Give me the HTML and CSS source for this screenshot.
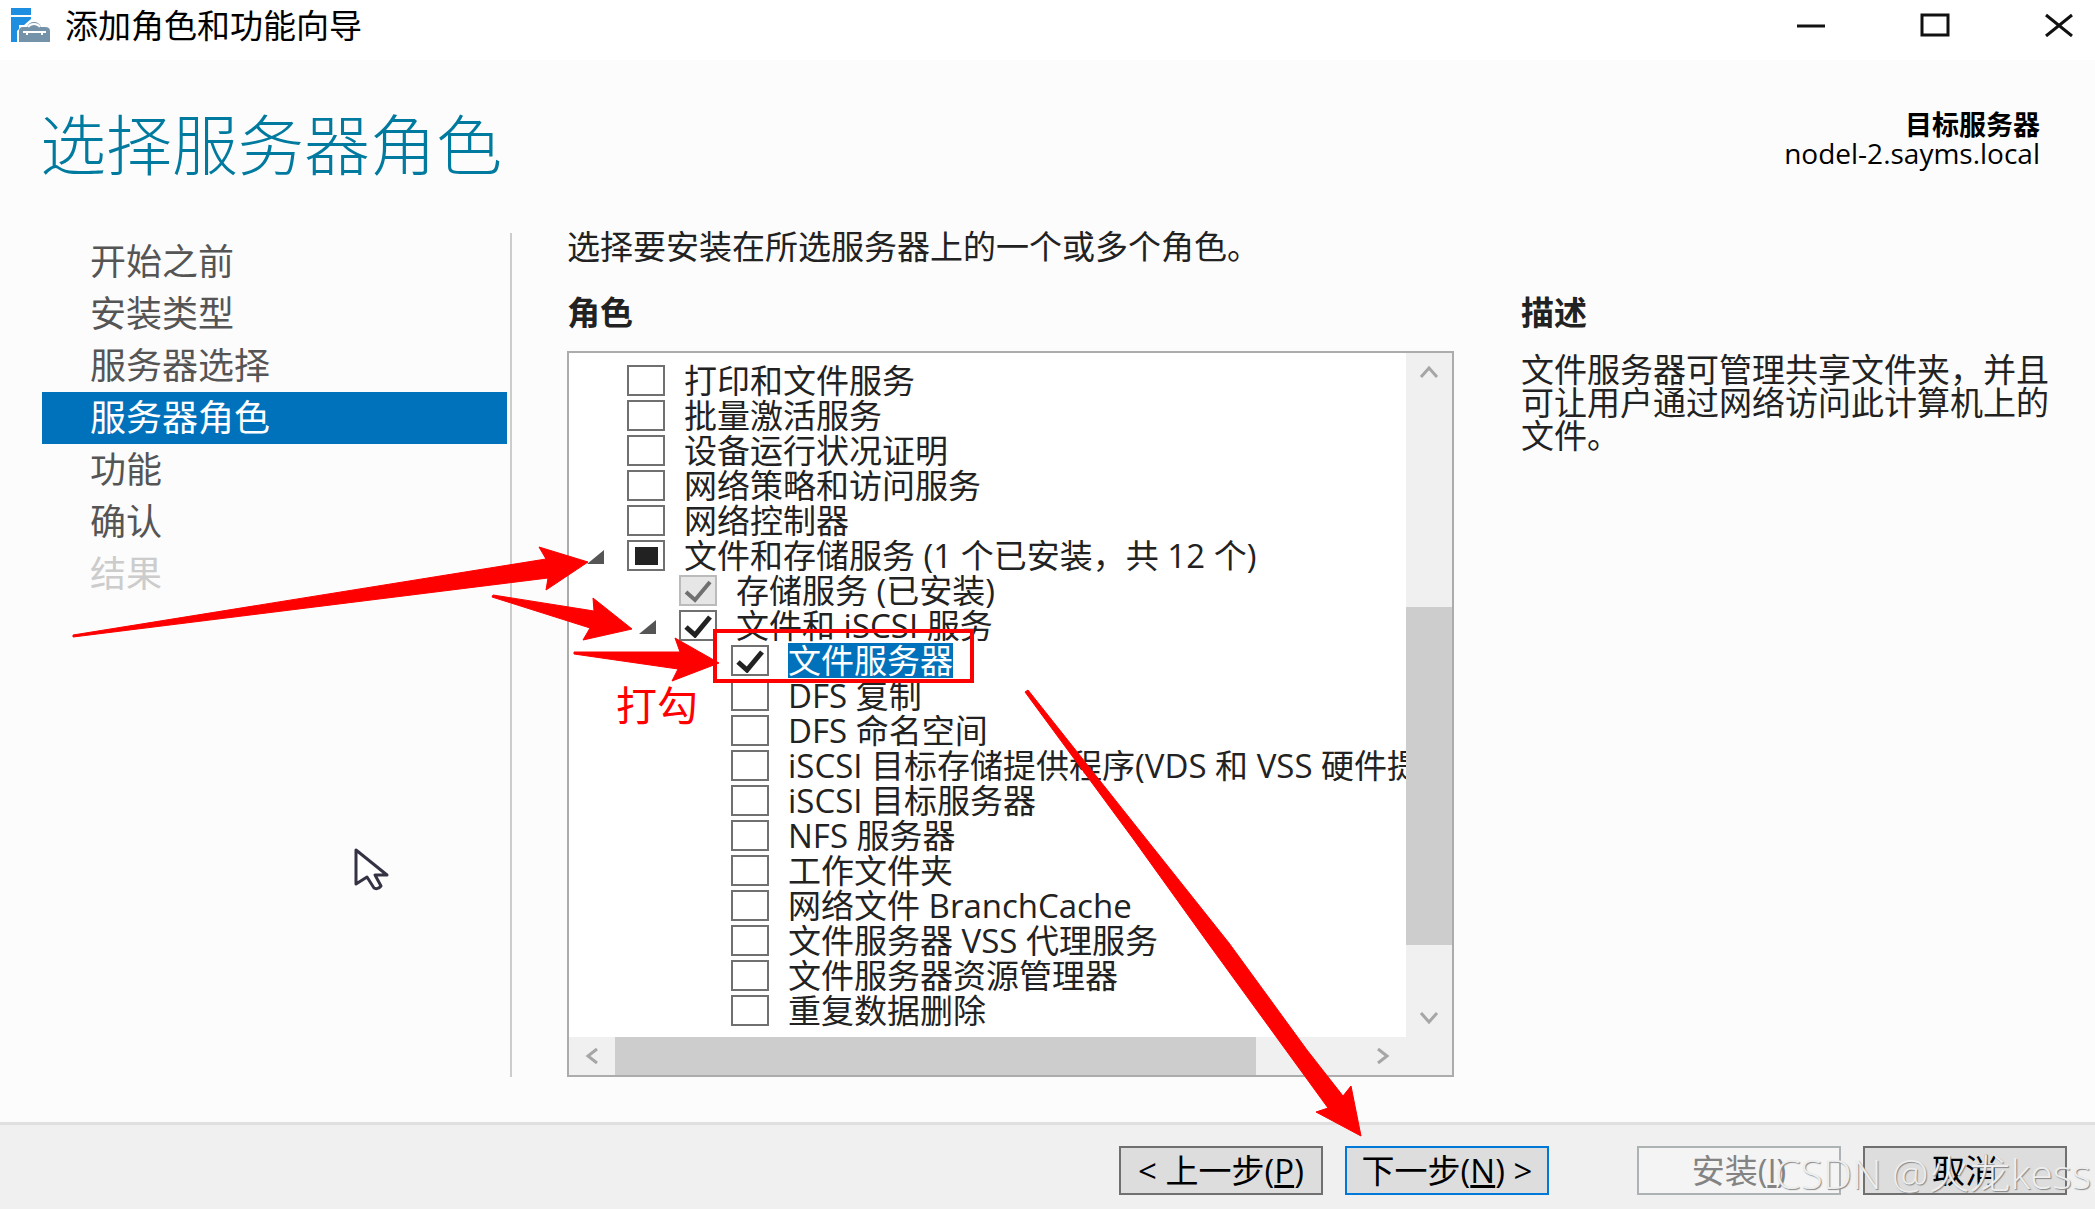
FILE: index.html
```
<!DOCTYPE html>
<html lang="zh-CN">

<head>
    <meta charset="UTF-8">
    <meta name="viewport" content="width=device-width, initial-scale=1.0">
    <title>添加角色和功能向导</title>
    <link rel="stylesheet" href="styles.css">
</head>

<body>
    <div class="window">
        <div class="titlebar">
            <svg class="app-icon" viewBox="0 0 40 34">
                <path fill="#1e8fe0" d="M0 0h20v7H0zM0 9h20v2l-7 6H8v4l-2 2v11H0z" />
                <path fill="#7593a8" d="M8 23q0-4 4-4h4q2-5 7-5t7 5h4q5 0 5 4v11H8z" />
                <path fill="none" stroke="#fff" stroke-width="2" d="M17 19q2-3 6-3t6 3M12 24h23M16 23v4M31 23v4" />
            </svg>
            <span class="title">添加角色和功能向导</span>
            <div class="win-btns">
                <button type="button" aria-label="最小化"><svg viewBox="0 0 30 24"><path d="M1 13h28" /></svg></button>
                <button type="button" aria-label="最大化"><svg viewBox="0 0 30 24"><path d="M2 2h26v20H2z" /></svg></button>
                <button type="button" aria-label="关闭"><svg viewBox="0 0 30 24"><path d="M2 2l26 21M28 2L2 23" /></svg></button>
            </div>
        </div>

        <div class="header">
            <h1>选择服务器角色</h1>
            <div class="target">
                <b>目标服务器</b>
                <span>nodel-2.sayms.local</span>
            </div>
        </div>

        <div class="main">
            <ul class="steps">
                <li><a href="#">开始之前</a></li>
                <li><a href="#">安装类型</a></li>
                <li><a href="#">服务器选择</a></li>
                <li class="select"><a href="#">服务器角色</a></li>
                <li><a href="#">功能</a></li>
                <li><a href="#">确认</a></li>
                <li class="disabled"><a href="#">结果</a></li>
            </ul>

            <div class="content">
                <p class="intro">选择要安装在所选服务器上的一个或多个角色。</p>
                <div class="columns">
                    <div class="roles">
                        <h2>角色</h2>
                        <div class="listbox">
                            <ul class="tree">
                                <li><label><input type="checkbox">打印和文件服务</label></li>
                                <li><label><input type="checkbox">批量激活服务</label></li>
                                <li><label><input type="checkbox">设备运行状况证明</label></li>
                                <li><label><input type="checkbox">网络策略和访问服务</label></li>
                                <li><label><input type="checkbox">网络控制器</label></li>
                                <li class="open"><label><input type="checkbox" class="part">文件和存储服务 (1 个已安装，共 12 个)</label></li>
                                <li class="lv1"><label><input type="checkbox" checked disabled>存储服务 (已安装)</label></li>
                                <li class="lv1 open"><label><input type="checkbox" checked>文件和 iSCSI 服务</label></li>
                                <li class="lv2 current"><label><input type="checkbox" checked><span>文件服务器</span></label></li>
                                <li class="lv2"><label><input type="checkbox">DFS 复制</label></li>
                                <li class="lv2"><label><input type="checkbox">DFS 命名空间</label></li>
                                <li class="lv2"><label><input type="checkbox">iSCSI 目标存储提供程序(VDS 和 VSS 硬件提供程序)</label></li>
                                <li class="lv2"><label><input type="checkbox">iSCSI 目标服务器</label></li>
                                <li class="lv2"><label><input type="checkbox">NFS 服务器</label></li>
                                <li class="lv2"><label><input type="checkbox">工作文件夹</label></li>
                                <li class="lv2"><label><input type="checkbox">网络文件 BranchCache</label></li>
                                <li class="lv2"><label><input type="checkbox">文件服务器 VSS 代理服务</label></li>
                                <li class="lv2"><label><input type="checkbox">文件服务器资源管理器</label></li>
                                <li class="lv2"><label><input type="checkbox">重复数据删除</label></li>
                            </ul>
                            <div class="vbar">
                                <button type="button" aria-label="向上"><svg viewBox="0 0 20 14"><path d="M2 12l8-9 8 9" /></svg></button>
                                <div class="track"><div class="thumb"></div></div>
                                <button type="button" aria-label="向下"><svg viewBox="0 0 20 14"><path d="M2 2l8 9 8-9" /></svg></button>
                            </div>
                            <div class="hbar">
                                <button type="button" aria-label="向左"><svg viewBox="0 0 14 18"><path d="M12 2L3 9l9 7" /></svg></button>
                                <div class="track"><div class="thumb"></div></div>
                                <button type="button" aria-label="向右"><svg viewBox="0 0 14 18"><path d="M2 2l9 7-9 7" /></svg></button>
                            </div>
                            <div class="corner"></div>
                        </div>
                    </div>
                    <div class="desc">
                        <h2>描述</h2>
                        <p>文件服务器可管理共享文件夹，并且可让用户通过网络访问此计算机上的文件。</p>
                    </div>
                </div>
            </div>
        </div>

        <div class="footer">
            <button type="button">&lt; 上一步(<u>P</u>)</button>
            <button type="button" class="default">下一步(<u>N</u>) &gt;</button>
            <button type="button" class="install" disabled>安装(<u>I</u>)</button>
            <button type="button">取消</button>
        </div>

        <!-- 标注 -->
        <svg class="marks" width="2095" height="1209" viewBox="0 0 2095 1209">
            <g fill="#f00" stroke="#f00" stroke-linejoin="round">
                <path d="M73 637L73 635 546 559 539 547 588 562 546 590 548 578z" />
                <path d="M492 597L493 595 594 611 593 598 632 629 583 640 590 628z" />
                <path d="M574 654L574 652 680 652 675 638 719 663 672 681 678 669z" />
                <path d="M1025 692L1028 690 1147 840 1229 943 1307 1050 1343 1096 1351 1086 1361 1136 1316 1112 1328 1108 1208 943 1134 840z" />
            </g>
            <rect x="715" y="631" width="257" height="50" fill="none" stroke="#f00" stroke-width="4" />
            <path d="M356 850v34l11-7 7 11q4 2 7-2l-6-11h12z" fill="#fff" stroke="#334" stroke-width="3" stroke-linejoin="round" />
        </svg>
        <span class="note">打勾</span>
        <span class="watermark">CSDN @火龙kess</span>
    </div>
</body>

</html>
```
FILE: styles.css
```
* {
    margin: 0;
    padding: 0;
    box-sizing: border-box;
    list-style: none;
}

body {
    font-family: "Open Sans", "Noto Sans CJK SC", sans-serif;
    font-size: 33px;
    line-height: 35px;
    color: #222;
    background-color: #fcfcfc;
}

button {
    font: inherit;
    border: none;
    background: none;
}

a {
    color: inherit;
    text-decoration: none;
}

h2 {
    font-size: 33px;
    line-height: 35px;
}

.window {
    position: relative;
    display: flex;
    flex-direction: column;
    min-height: 100vh;
    overflow: hidden;
}

.titlebar {
    display: flex;
    align-items: center;
    height: 60px;
    padding: 0 0 10px 11px;
    background-color: #fff;
    color: #000;
}

.app-icon {
    width: 40px;
    height: 34px;
}

.title {
    margin-left: 14px;
}

.win-btns {
    display: flex;
    margin-left: auto;
}

.win-btns button {
    width: 124px;
    height: 50px;
    display: flex;
    align-items: center;
    justify-content: center;
}

.win-btns button:last-child {
    width: 72px;
    margin-left: 26px;
}

.win-btns svg {
    width: 30px;
    height: 24px;
    fill: none;
    stroke: #111;
    stroke-width: 3;
}

.header {
    display: flex;
    justify-content: space-between;
    padding: 50px 55px 0 40px;
    height: 173px;
}

.header h1 {
    font-size: 66px;
    line-height: 68px;
    font-weight: 300;
    color: #007a9e;
}

.target {
    font-size: 28px;
    line-height: 29px;
    text-align: right;
    color: #000;
}

.target b,
.target span {
    display: block;
}

.target b {
    font-size: 27px;
}

.main {
    flex: 1;
    display: flex;
    padding: 0 30px 45px 42px;
}

.steps {
    flex: none;
    width: 470px;
    padding: 3px 3px 0 0;
    border-right: 2px solid #ccc;
    font-size: 36px;
    line-height: 52px;
    color: #555;
}

.steps li {
    padding-left: 48px;
}

.steps .select {
    background-color: #0072bc;
    color: #fff;
}

.steps .disabled {
    color: #ccc;
}

.content {
    flex: 1;
    min-width: 0;
    display: flex;
    flex-direction: column;
    padding-left: 55px;
}

.intro {
    margin: -4px 0 31px;
}

.columns {
    flex: 1;
    display: flex;
    gap: 67px;
}

.roles {
    flex: 1;
    min-width: 0;
    display: flex;
    flex-direction: column;
}

.listbox {
    flex: 1;
    display: grid;
    grid-template-columns: 1fr 46px;
    grid-template-rows: 1fr 38px;
    margin-top: 21px;
    border: 2px solid #acacac;
    background-color: #fff;
}

.tree {
    min-width: 0;
    overflow: hidden;
    padding: 10px 0 9px 58px;
    white-space: nowrap;
}

.tree li {
    position: relative;
    height: 35px;
}

.tree .lv1 {
    padding-left: 52px;
}

.tree .lv2 {
    padding-left: 104px;
}

.tree label {
    display: flex;
    align-items: center;
    gap: 19px;
}

.tree input {
    flex: none;
    appearance: none;
    width: 38px;
    height: 31px;
    border: 2px solid #707070;
    background: #fff center / 28px 24px no-repeat;
}

.tree input:checked {
    background-image: url("data:image/svg+xml,%3Csvg xmlns='http://www.w3.org/2000/svg' viewBox='0 0 28 24'%3E%3Cpath d='M2 13l9 8L26 3' fill='none' stroke='%23222' stroke-width='5'/%3E%3C/svg%3E");
}

.tree input:disabled {
    border-color: #bbb;
    background-color: #e6e6e6;
    background-image: url("data:image/svg+xml,%3Csvg xmlns='http://www.w3.org/2000/svg' viewBox='0 0 28 24'%3E%3Cpath d='M2 13l9 8L26 3' fill='none' stroke='%23707070' stroke-width='4'/%3E%3C/svg%3E");
}

.tree .part {
    background: linear-gradient(#222, #222) center / 23px 18px no-repeat #fff;
}

/* 展开三角 */
.tree .open::before {
    content: "";
    position: absolute;
    left: -40px;
    top: 12px;
    width: 17px;
    height: 14px;
    background-color: #555;
    clip-path: polygon(100% 0, 100% 100%, 0 100%);
}

.tree .lv1.open::before {
    left: 12px;
}

.tree .current span {
    background-color: #0072bc;
    color: #fff;
}

.vbar,
.hbar {
    display: flex;
    background-color: #f0f0f0;
}

.vbar {
    flex-direction: column;
}

.vbar button {
    height: 38px;
}

.hbar button {
    width: 46px;
}

.vbar button,
.hbar button {
    display: flex;
    align-items: center;
    justify-content: center;
}

.vbar svg {
    width: 20px;
    height: 14px;
}

.hbar svg {
    width: 14px;
    height: 18px;
}

.vbar svg,
.hbar svg {
    fill: none;
    stroke: #a6a6a6;
    stroke-width: 3;
}

.track {
    flex: 1;
    display: flex;
}

.thumb {
    background-color: #cdcdcd;
}

.vbar .track {
    flex-direction: column;
    justify-content: flex-end;
    padding-bottom: 54px;
}

.vbar .thumb {
    height: 61%;
}

.hbar .thumb {
    width: 86%;
}

.corner {
    background-color: #f0f0f0;
}

.desc {
    flex: none;
    width: 544px;
}

.desc p {
    margin-top: 23px;
    line-height: 33px;
}

.footer {
    display: flex;
    justify-content: flex-end;
    gap: 22px;
    height: 88px;
    padding: 21px 28px 0 0;
    border-top: 3px solid #dfdfdf;
    background-color: #f0f0f0;
}

.footer button {
    width: 204px;
    height: 49px;
    border: 2px solid #707070;
    background-color: #ddd;
    color: #000;
    white-space: nowrap;
}

.footer .default {
    border-color: #0078d7;
}

.footer .install {
    margin-left: 66px;
    border-color: #adb2b5;
    background-color: #f4f4f4;
    color: #838383;
}

.marks {
    position: absolute;
    left: 0;
    top: 0;
    pointer-events: none;
}

.note {
    position: absolute;
    left: 616px;
    top: 680px;
    font-size: 41px;
    line-height: 50px;
    color: #f00;
}

.watermark {
    position: absolute;
    right: 4px;
    bottom: 12px;
    font-size: 41px;
    line-height: 50px;
    font-weight: 300;
    color: #eee;
    text-shadow: 1px 1px 1px #888;
    pointer-events: none;
}
```
